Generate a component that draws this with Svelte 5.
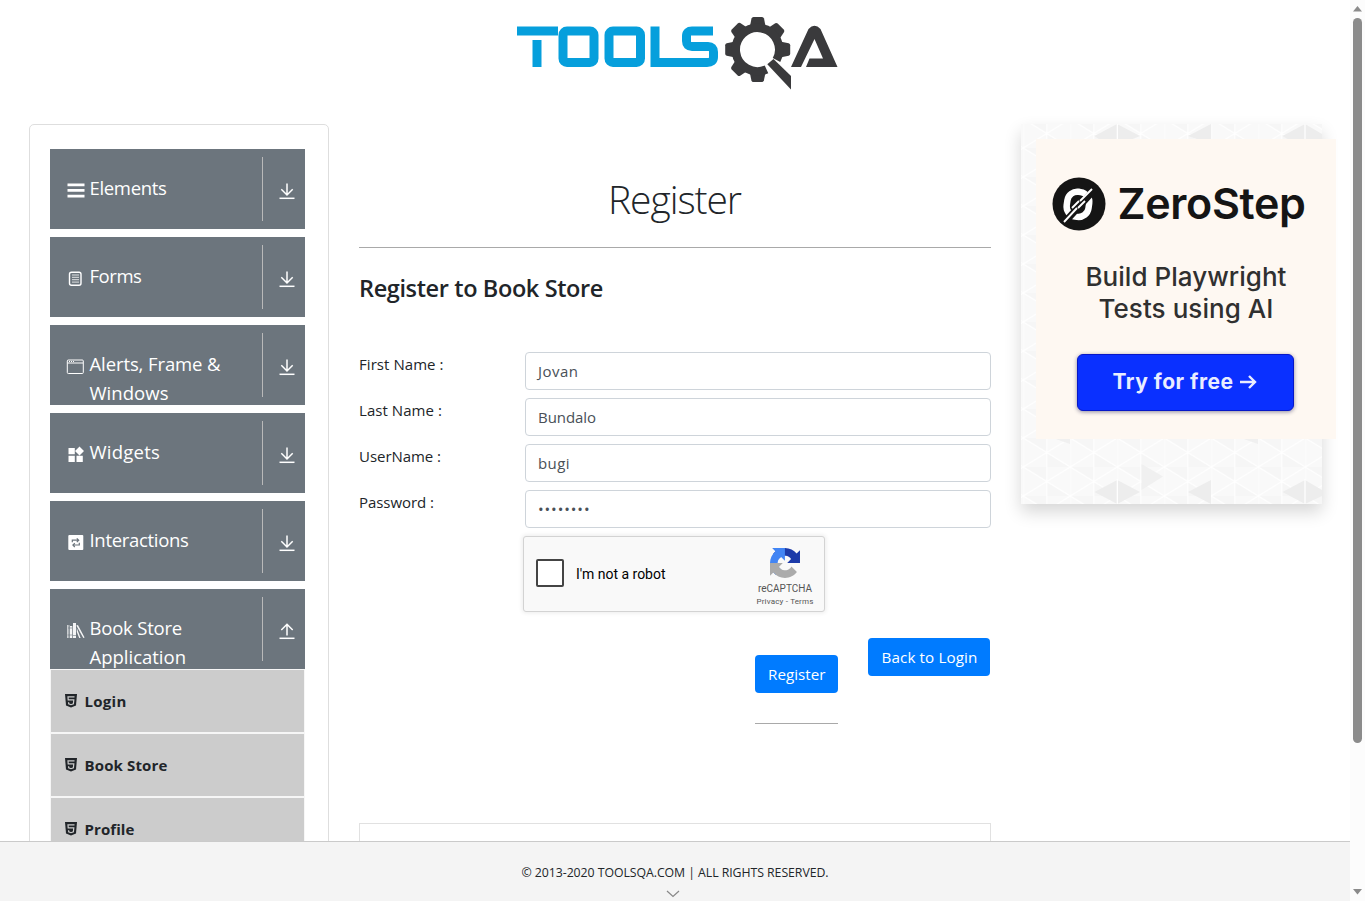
<script>
  const groups = [
    { label: 'Elements', icon: 'bars', w: 77 },
    { label: 'Forms', icon: 'form', w: 52 },
    { label: 'Alerts, Frame &', second: 'Windows', icon: 'window', w: 131, w2: 79 },
    { label: 'Widgets', icon: 'widgets', w: 70.5 },
    { label: 'Interactions', icon: 'swap', w: 99 },
    { label: 'Book Store', second: 'Application', icon: 'books', w: 92.5, w2: 96.5, open: true }
  ];
  const links = [
    { label: 'Login', w: 42 },
    { label: 'Book Store', w: 83 },
    { label: 'Profile', w: 50 }
  ];
  const fields = [
    { label: 'First Name :', w: 84.5, value: 'Jovan', vw: 40.5 },
    { label: 'Last Name :', w: 83, value: 'Bundalo', vw: 58 },
    { label: 'UserName :', w: 82, value: 'bugi', vw: 32 },
    { label: 'Password :', w: 75, value: '••••••••', vw: 52.5 }
  ];
  const teeth = [0, 45, 90, 180, 225, 270, 315];

  // Spreads the letter spacing so that a label takes its intended width.
  function fit(node, width) {
    node.style.letterSpacing = '0px';
    const natural = node.getBoundingClientRect().width;
    node.style.letterSpacing = (width - natural) / node.textContent.length + 'px';
  }
</script>

<div class="page">
  <main>
    <header>
      <svg class="logo" width="324" height="78" viewBox="515 14 324 78">
        <g fill="none" stroke="#069fdc" stroke-width="9">
          <path d="M517 31H558" />
          <path d="M537 40V67" />
          <rect x="563" y="31" width="31" height="31.500" rx="4" />
          <rect x="609" y="31" width="31.500" height="31.500" rx="4" />
          <path d="M655 26.500V62.500H707Q713.500 62.500 713.500 57V52Q713.500 46.500 708 46.500H692Q686.500 46.500 686.500 41V36Q686.500 31 692 31H713" />
        </g>
        <g fill="#3a3a3c">
          {#each teeth as a}
            <path d="M750 26L751.500 18.500Q752 17 753.500 17H762Q763.500 17 764 18.500L765.500 26Z" transform="rotate({a} 757.700 49.500)" />
          {/each}
          <path d="M767.300 64.300L773.500 59L791 76V89.500Z" />
          <path d="M791 67L808.500 29Q814.500 22.500 820.500 29L837.500 67H806L809.500 58.500H823L814.500 39L801 67Z" />
        </g>
        <path d="M776.500 60A21.700 21.700 0 1 0 766.500 69.300" fill="none" stroke="#3a3a3c" stroke-width="8.500" />
      </svg>
    </header>
    <div class="columns">
      <nav>
        {#each groups as g}
          <div class="group">
            <svg class="gi" width="20" height="20" viewBox="0 0 20 20" fill="#fff">
              {#if g.icon === 'bars'}
                <path d="M1.500 3.500h17v2.800h-17zM1.500 9h17v2.800h-17zM1.500 14.800h17v2.800h-17z" />
              {:else if g.icon === 'form'}
                <rect x="3.500" y="4.200" width="11.500" height="13" rx="2" fill="none" stroke="#fff" stroke-width="1.400" />
                <path d="M6 7h7M6 9.300h7M6 11.700h7M6 14.100h7" stroke="#fff" stroke-opacity=".8" />
              {:else if g.icon === 'window'}
                <rect x="1.300" y="4" width="16" height="13.500" rx="1" fill="none" stroke="#fff" />
                <path d="M1.500 7h15.500M3 5.500h1M5 5.500h1M7 5.500h1" stroke="#fff" />
              {:else if g.icon === 'widgets'}
                <path d="M2.500 4h6.300v6.300H2.500zM2.500 11.700h6.300V18H2.500zM10.500 11.700h6.300V18h-6.300zM13.500 2.500l4.500 4.500-4.500 4.500L9 7z" />
              {:else if g.icon === 'swap'}
                <rect x="2.300" y="3" width="15" height="15" rx="1" />
                <path d="M6.300 10.200V8.200h6M10.800 6.300l1.900 1.900-1.900 1.900M13.300 10.800v2.200h-6M8.800 11.200l-1.900 1.900L8.800 15" fill="none" stroke="#6c757d" stroke-width="1.200" />
              {:else}
                <path d="M1.300 5h2v13h-2zM4 6h2.300v12H4zM7 3h3v15H7zM10.300 5.500l1.600-.5L18.600 17.500l-1.300.5zM10.800 8l3.800 10h-1.400l-2.400-6z" fill-opacity=".92" />
                <path d="M1.500 15h5M7 15.500h3M2 8h4M2.600 5v13" stroke="#6c757d" stroke-width=".6" />
              {/if}
            </svg>
            <div class="name">
              <span use:fit={g.w}>{g.label}</span>
              {#if g.second}<span use:fit={g.w2}>{g.second}</span>{/if}
            </div>
            <div class="toggle">
              <svg width="16" height="18" viewBox="0 0 16 18" fill="none" stroke="#fff" stroke-width="1.500">
                {#if g.open}
                  <path d="M8 13.500V2.500M2.300 8l5.700-5.700L13.700 8" /><path d="M.5 16.300h15" />
                {:else}
                  <path d="M8 1.500v11.500M2.300 7.300L8 13l5.700-5.700" /><path d="M.5 16.300h15" />
                {/if}
              </svg>
            </div>
          </div>
        {/each}
        <ul>
          {#each links as l}
            <li>
              <svg width="12" height="14" viewBox="0 0 12 14"><path d="M0 0h12l-1 11.500L6 13.500 1 11.500z" fill="#212529" /><path d="M9.500 2.800H3l.2 3h5.600l-.4 4L6 10.700l-2.300-.9-.1-1.500" fill="none" stroke="#ccc" stroke-width="1.200" /></svg>
              <span use:fit={l.w}>{l.label}</span>
            </li>
          {/each}
        </ul>
      </nav>

      <section class="content">
        <h1><span use:fit={133}>Register</span></h1>
        <hr />
        <h2><span use:fit={244}>Register to Book Store</span></h2>
        <form>
          {#each fields as f}
            <div class="field">
              <div class="lab"><span use:fit={f.w}>{f.label}</span></div>
              <div class="box"><span use:fit={f.vw}>{f.value}</span></div>
            </div>
          {/each}
        </form>
        <div class="captcha">
          <div class="check"></div>
          <span class="robot"><span use:fit={89.5}>I'm not a robot</span></span>
          <div class="brand">
            <svg width="30" height="30" viewBox="0 0 64 64">
              <path d="M64 31.955l-.033-1.370V4.687l-7.160 7.160C50.948 4.674 42.033.093 32.050.093c-10.400 0-19.622 4.960-25.458 12.640l11.736 11.860a15.550 15.550 0 0 1 4.754-5.334c2.050-1.600 4.952-2.906 8.968-2.906.485 0 .86.057 1.135.163 4.976.393 9.288 3.140 11.828 7.124l-8.307 8.307L64 31.953" fill="#1c3aa9" />
              <path d="M31.862.094l-1.370.033H4.594l7.160 7.160C4.580 13.147 0 22.060 0 32.046c0 10.400 4.960 19.622 12.640 25.458L24.500 45.768a15.550 15.550 0 0 1-5.334-4.754c-1.600-2.050-2.906-4.952-2.906-8.968 0-.485.057-.86.163-1.135.393-4.976 3.140-9.288 7.124-11.828l8.307 8.307L31.860.095" fill="#4285f4" />
              <path d="M.001 32.045l.033 1.370v25.898l7.160-7.160c5.860 7.173 14.774 11.754 24.760 11.754 10.400 0 19.622-4.960 25.458-12.640l-11.736-11.860a15.550 15.550 0 0 1-4.754 5.334c-2.050 1.600-4.952 2.906-8.968 2.906-.485 0-.86-.057-1.135-.163-4.976-.393-9.288-3.140-11.828-7.124l8.307-8.307L0 32.047" fill="#ababab" />
            </svg>
            <b><span use:fit={54}>reCAPTCHA</span></b>
            <small><span use:fit={57}>Privacy - Terms</span></small>
          </div>
        </div>
        <div class="actions">
          <div class="submit">
            <button><span use:fit={57.5}>Register</span></button>
            <hr />
          </div>
          <button><span use:fit={96}>Back to Login</span></button>
        </div>
        <div class="slot"></div>
      </section>

      <aside>
        <svg class="mosaic" width="301" height="380">
          <defs>
            <pattern id="tri" width="47" height="29" patternUnits="userSpaceOnUse" x="2.300" y="-5">
              <rect width="47" height="29" fill="#f9f9f9" />
              <path d="M0 0L23.500 14.500V0zM23.500 14.500L47 29H23.500z" fill="#f6f6f6" />
              <path d="M0 0L47 29M47 0L0 29M0 0V29M23.500 0V29" stroke="#fff" stroke-width="1.200" />
            </pattern>
          </defs>
          <rect width="301" height="380" fill="url(#tri)" />
          <g fill="#ededed">
            <path d="M73.500 12L96 0L119 12L100 20H85zM167 12L190 0V20zM261.500 12L284 0L301 10V20H275z" />
            <path d="M73.500 368L96.300 356L119 368L96.300 380zM167 368L190 356V380zM261.500 368L284 356L301 366V372L284 380z" />
            <path d="M120.500 340L142 352.500L120.500 366zM214 312H237V320zM26 312H49V320z" fill="#f0f0f0" />
          </g>
          <path d="M96.300 0V20M96.300 355V380M284 0V20M284 355V380" stroke="#fff" stroke-width="1.200" />
        </svg>
        <div class="ad">
          <div class="zero">
            <svg width="54" height="54" viewBox="0 0 54 54">
              <circle cx="27" cy="27" r="26.500" fill="#151515" />
              <rect x="15" y="15" width="22" height="25" rx="10" fill="none" stroke="#fff" stroke-width="6.500" transform="rotate(8 27 27)" />
              <path d="M12 46L43 12" stroke="#151515" stroke-width="7" />
              <path d="M12 45L25 31M20 31l7-7M26 31l7-7M28 24L40 12" stroke="#fff" stroke-width="1.900" />
            </svg>
            <strong><span use:fit={188}>ZeroStep</span></strong>
          </div>
          <p><span use:fit={201}>Build Playwright</span><br /><span use:fit={175}>Tests using AI</span></p>
          <div class="cta">
            <span use:fit={121}>Try for free</span>
            <svg width="17" height="16" viewBox="0 0 17 16" fill="none" stroke="#e9edff" stroke-width="2.400"><path d="M0 8h15M9 2l6 6-6 6" /></svg>
          </div>
        </div>
      </aside>
    </div>
  </main>
  <footer>
    <span use:fit={307}>© 2013-2020 TOOLSQA.COM | ALL RIGHTS RESERVED.</span>
    <svg width="14" height="8" viewBox="0 0 14 8" fill="none" stroke="#888" stroke-width="1.200"><path d="M1 1l6 5.500L13 1" /></svg>
  </footer>
  <div class="scroll">
    <svg width="9" height="6"><path d="M4.500 0L9 5.500H0z" fill="#8b8b8b" /></svg>
    <i></i>
    <svg width="9" height="6"><path d="M0 0H9L4.500 5.500z" fill="#8b8b8b" /></svg>
  </div>
</div>

<style>
  :global(body) { margin: 0; overflow: hidden; }
  * { box-sizing: border-box; }
  span { white-space: nowrap; }
  .page { width: 1365px; height: 901px; display: grid; grid-template: 841px 60px / 1350px 15px; background: #fff; color: #212529; font: 16px/24px "Open Sans", "Noto Sans", sans-serif; }
  main { overflow: hidden; }
  header { height: 124px; padding: 14px 0 0 515px; }
  .logo { display: block; }
  .columns { display: grid; grid-template-columns: 300px 632px 301px; column-gap: 30px; padding-left: 29px; align-items: start; }
  nav { height: 800px; border: 1px solid #dedede; border-radius: 5px; padding: 24px 23px 0 20px; }
  .group { display: flex; height: 80px; margin-bottom: 8px; background: #6c757d; color: #fff; padding: 8px 0 8px 15.500px; }
  .group:nth-of-type(6) { margin-bottom: 0; }
  .gi { margin-top: 23px; flex: none; }
  .name { width: 176.500px; padding: 16px 0 0 4px; font-size: 18.500px; line-height: 29px; display: flex; flex-direction: column; align-items: flex-start; }
  .toggle { width: 43px; height: 64px; border-left: 1px solid #b9b9b9; padding: 25px 0 0 16px; }
  .toggle svg { display: block; }
  ul { list-style: none; margin: 0; padding: 0; }
  li { display: flex; align-items: center; gap: 7.500px; height: 64px; border: 1px solid #f6f6f6; background: #ccc; padding-left: 14px; font-weight: 700; font-size: 15px; }
  h1 { margin: 51px 0 0; height: 72px; font: 300 39px/48px "Open Sans", sans-serif; text-align: center; color: #212529; }
  h1 span { margin-left: -1px; }
  hr { margin: 0; border: 0; border-top: 1px solid #a9a9a9; }
  h2 { margin: 26px 0 49px; font: 600 23.500px/29px "Open Sans", sans-serif; }
  form { display: grid; gap: 8px; }
  .field { display: grid; grid-template-columns: 166px 466px; height: 38px; font-size: 15px; }
  .lab { line-height: 24px; }
  .box { height: 38px; border: 1px solid #ced4da; border-radius: 4px; padding: 0 12px; line-height: 37px; color: #495057; }
  .captcha { width: 302px; height: 76px; margin: 8px 0 0 164px; border: 1px solid #d3d3d3; border-radius: 3px; background: #f9f9f9; box-shadow: 0 0 4px 1px rgba(0,0,0,.08); display: flex; font-family: Roboto, sans-serif; color: #000; }
  .check { width: 28px; height: 28px; border: 2px solid #444; border-radius: 2px; background: #fff; margin: 22px 12px 0; flex: none; }
  .robot { width: 176px; font-size: 14px; line-height: 74px; }
  .brand { width: 70px; text-align: center; color: #555; padding-top: 11px; margin-left: -2px; }
  .brand svg { display: block; margin: 0 auto; }
  .brand b { display: block; font: 10px/16px Roboto, sans-serif; padding-top: 3px; }
  .brand small { display: block; font: 8px/10px Roboto, sans-serif; }
  .actions { display: flex; justify-content: flex-end; align-items: flex-start; gap: 30px; padding: 26px 1px 0 0; height: 211px; }
  button { display: block; height: 38px; padding: 0 0 0 13.500px; width: 122px; border: 0; border-radius: 4px; background: #007bff; color: #fff; text-align: left; font: 15.200px/38px "Open Sans", sans-serif; }
  .submit { padding-top: 17px; width: 83px; }
  .submit button { width: 83px; margin-bottom: 30px; padding-left: 13px; }
  .slot { height: 100px; border: 1px solid #e1e1e1; }
  aside { width: 301px; height: 380px; display: grid; box-shadow: 0 8px 16px rgba(0,0,0,.16); }
  .mosaic, .ad { grid-area: 1 / 1; }
  .ad { width: 300px; height: 300px; margin: 15px 0 0 15px; background: #fef8f2; font-family: Inter, sans-serif; color: #303030; }
  .zero { display: flex; padding: 38px 0 0 16px; gap: 11.500px; height: 93px; }
  .zero strong { font: 600 43px/53px Inter, sans-serif; color: #151515; }
  .ad p { margin: 29px 0 28.500px; text-align: center; font: 500 26px/32px Inter, sans-serif; }
  .cta { width: 217px; height: 57px; margin-left: 41px; border-radius: 6px; background: #0a30ff; border: 1px solid #0717c8; box-shadow: 0 1px 4px rgba(0,0,60,.45); display: flex; align-items: center; gap: 6px; padding-left: 34.500px; color: #e9edff; font: 700 21px/54px Inter, sans-serif; }
  footer { background: #f4f4f4; border-top: 1px solid #cacaca; display: grid; justify-items: center; align-content: start; padding-top: 19px; font-size: 12.300px; }
  footer svg { margin: 5px 4px 0 0; }
  .scroll { grid-area: 1 / 2 / 3 / 3; background: #fcfcfc; display: flex; flex-direction: column; align-items: center; padding: 6px 0; }
  .scroll i { width: 9px; height: 725px; border-radius: 5px; background: #8b8b8b; margin: 6px 0 auto; }
</style>
